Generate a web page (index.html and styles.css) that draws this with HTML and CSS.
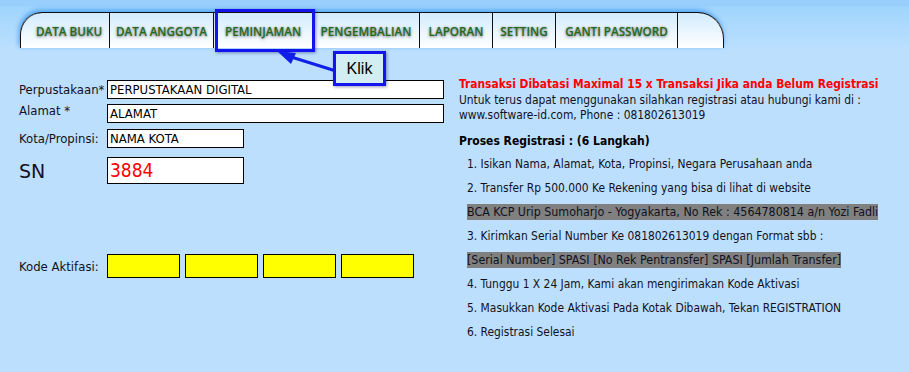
FILE: index.html
```html
<!DOCTYPE html>
<html>
<head>
<meta charset="utf-8">
<link rel="stylesheet" href="styles.css">
</head>
<body>
<div class="header">
  <div class="tabs">
    <div class="tab first" style="width:90px">DATA BUKU</div>
    <div class="tab" style="width:104px">DATA ANGGOTA</div>
    <div class="tab" style="width:99px">PEMINJAMAN</div>
    <div class="tab" style="width:107px">PENGEMBALIAN</div>
    <div class="tab" style="width:73px">LAPORAN</div>
    <div class="tab" style="width:63px">SETTING</div>
    <div class="tab" style="width:122px">GANTI PASSWORD</div>
    <div class="tab last"></div>
  </div>
  <div class="highlight"></div>
  <svg class="arrow" width="70" height="30" viewBox="0 0 70 30">
    <line x1="62" y1="22" x2="14" y2="7" stroke="#1020e8" stroke-width="3"/>
    <polygon points="3,2 22,4 17,15" fill="#1020e8"/>
  </svg>
  <div class="callout">Klik</div>
</div>
<div class="main">
  <div class="left">
    <div class="row r1"><div class="lbl">Perpustakaan*</div><div class="field wide">PERPUSTAKAAN DIGITAL</div></div>
    <div class="row r2"><div class="lbl top">Alamat *</div><div class="field wide">ALAMAT</div></div>
    <div class="row r3"><div class="lbl">Kota/Propinsi:</div><div class="field narrow">NAMA KOTA</div></div>
    <div class="row r4"><div class="lbl big">SN</div><div class="field narrow sn">3884</div></div>
    <div class="row r5"><div class="lbl">Kode Aktifasi:</div>
      <div class="codes"><div class="code"></div><div class="code"></div><div class="code"></div><div class="code"></div></div>
    </div>
  </div>
  <div class="right">
    <div class="warn">Transaksi Dibatasi Maximal 15 x Transaksi Jika anda Belum Registrasi</div>
    <div class="info">Untuk terus dapat menggunakan silahkan registrasi atau hubungi kami di :</div>
    <div class="info">www.software-id.com, Phone : 081802613019</div>
    <div class="proses">Proses Registrasi : (6 Langkah)</div>
    <ol class="steps">
      <li>1. Isikan Nama, Alamat, Kota, Propinsi, Negara Perusahaan anda</li>
      <li>2. Transfer Rp 500.000 Ke Rekening yang bisa di lihat di website</li>
      <li><span class="mark">BCA KCP Urip Sumoharjo - Yogyakarta, No Rek : 4564780814 a/n Yozi Fadli</span></li>
      <li>3. Kirimkan Serial Number Ke 081802613019 dengan Format sbb :</li>
      <li><span class="mark">[Serial Number] SPASI [No Rek Pentransfer] SPASI [Jumlah Transfer]</span></li>
      <li>4. Tunggu 1 X 24 Jam, Kami akan mengirimakan Kode Aktivasi</li>
      <li>5. Masukkan Kode Aktivasi Pada Kotak Dibawah, Tekan REGISTRATION</li>
      <li>6. Registrasi Selesai</li>
    </ol>
  </div>
</div>
</body>
</html>
```
FILE: styles.css
```css
html, body {
  margin: 0;
  padding: 0;
}
body {
  width: 909px;
  height: 372px;
  overflow: hidden;
  background: linear-gradient(to bottom, #98cffc 0px, #98cffc 6px, #a0d5fd 7px, #bcdffe 50px, #bddffe 100%);
  font-family: "DejaVu Sans Condensed", "DejaVu Sans", sans-serif;
  font-size: 12px;
  color: #111122;
}
.header {
  position: relative;
  height: 48px;
  padding: 12px 0 0 20px;
  box-sizing: border-box;
}
.tabs {
  display: flex;
  height: 36px;
  border-top: 1px solid #111;
  border-radius: 22px 26px 0 0;
  box-shadow: -1px -2px 5px rgba(40, 140, 245, 0.75);
  background: linear-gradient(to bottom, #d2ebfd 0%, #ffffff 100%);
  box-sizing: border-box;
  width: 704px;
}
.tab {
  box-sizing: border-box;
  border-right: 1px solid #111;
  display: flex;
  align-items: center;
  justify-content: center;
  font-family: "Open Sans", sans-serif;
  font-weight: 600;
  font-size: 11.7px;
  color: #246a1c;
  text-shadow: 0 1px 3px rgba(0, 0, 0, 0.5), 0 0 2px rgba(0, 0, 0, 0.2);
  padding-top: 1px;
}
.tab.first {
  border-left: 1px solid #111;
  border-top-left-radius: 22px;
  padding-left: 8px;
}
.tab.last {
  flex: 1;
  border-right: 1px solid #111;
  border-top-right-radius: 26px;
}
.highlight {
  position: absolute;
  left: 215px;
  top: 9px;
  width: 100px;
  height: 43px;
  box-sizing: border-box;
  border: 3px solid #1414ee;
  box-shadow: 1px 1px 3px rgba(0, 0, 80, 0.4);
}
.arrow {
  position: absolute;
  left: 274px;
  top: 49px;
}
.callout {
  position: absolute;
  left: 333px;
  top: 51px;
  width: 53px;
  height: 35px;
  box-sizing: border-box;
  border: 3px solid #1414ee;
  background: #d3eef3;
  font-family: "Liberation Sans", Arial, sans-serif;
  font-size: 16px;
  color: #000;
  display: flex;
  align-items: center;
  justify-content: center;
  box-shadow: 1px 1px 3px rgba(0, 0, 80, 0.4);
}
.main {
  display: flex;
  padding-top: 27px;
}
.left {
  width: 459px;
  flex: none;
  padding-left: 19px;
  padding-top: 5px;
  box-sizing: border-box;
}
.row {
  display: flex;
  align-items: center;
}
.lbl {
  width: 88px;
  flex: none;
  white-space: nowrap;
  font-size: 13px;
}
.lbl.top {
  align-self: flex-start;
  margin-top: -1px;
}
.lbl.big {
  font-size: 19px;
  font-family: "DejaVu Sans", sans-serif;
}
.field {
  box-sizing: border-box;
  height: 19px;
  border: 1px solid #000;
  background: #fff;
  padding: 1px 0 0 2px;
  line-height: 15px;
  color: #000;
  font-size: 13px;
  white-space: nowrap;
}
.field.wide { width: 337px; }
.field.narrow { width: 137px; }
.r2 { margin-top: 5px; }
.r3 { margin-top: 6px; }
.r4 { margin-top: 9px; }
.r5 { margin-top: 70px; }
.field.sn {
  height: 27px;
  color: #ff0000;
  font-size: 19px;
  line-height: 23px;
  padding-top: 1px;
}
.codes {
  display: flex;
  gap: 5px;
}
.code {
  width: 73px;
  height: 24px;
  box-sizing: border-box;
  border: 1px solid #000;
  background: #ffff00;
}
.right {
  flex: 1;
}
.warn {
  color: #ff0000;
  font-weight: bold;
  line-height: 18px;
  font-size: 11.9px;
}
.info {
  line-height: 15px;
  font-size: 11.9px;
}
.proses {
  font-weight: bold;
  line-height: 16px;
  margin-top: 10px;
  color: #000;
  font-size: 12px;
}
.steps {
  list-style: none;
  margin: 3px 0 0 8px;
  padding: 0;
}
.steps li {
  line-height: 24px;
  height: 24px;
  white-space: nowrap;
  font-size: 11.9px;
}
.mark {
  background: #808080;
  padding: 1px 0;
  font-size: 12.35px;
}
```
